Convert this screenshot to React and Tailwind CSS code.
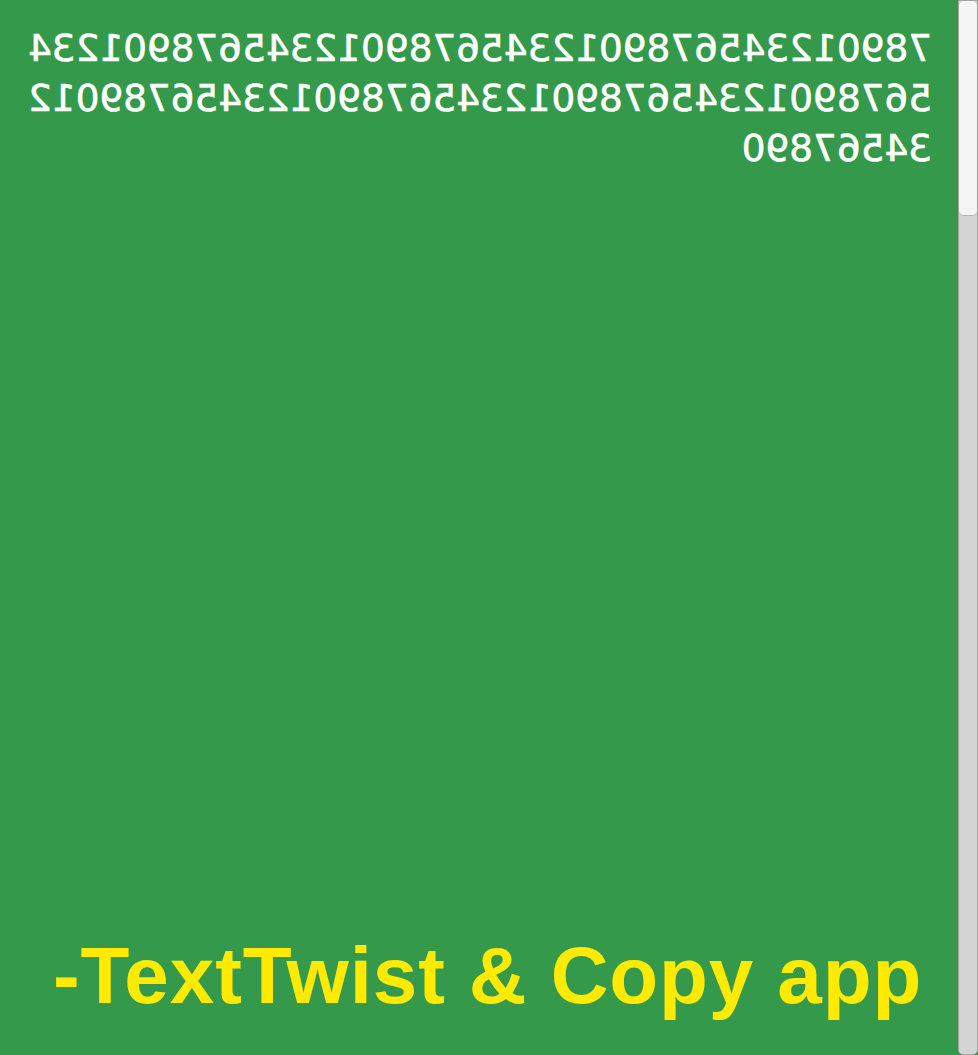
import React from "react";

const twisted = "7890" + "1234567890".repeat(8);

export default function App() {
  return (
    <div className="flex h-screen w-full overflow-hidden bg-[#34994a]">
      <div className="flex min-w-0 flex-1 flex-col">
        {/* texto girado */}
        <div className="-scale-x-100 px-[26px] pt-[23px]">
          <p
            className="break-all text-[37.4px] leading-[50px] text-white [-webkit-text-stroke:0.6px_white]"
            style={{ fontFamily: '"DejaVu Sans", sans-serif' }}
          >
            {twisted}
          </p>
        </div>

        <div className="flex-1" />

        <h1
          className="pb-[33px] pl-[53px] text-[80px] font-bold leading-[92px] tracking-[0.9px] text-[#ffea00]"
          style={{ fontFamily: '"Liberation Sans", Arial, sans-serif' }}
        >
          -TextTwist &amp; Copy app
        </h1>
      </div>

      {/* barra lateral */}
      <div className="flex w-[20px] flex-col overflow-hidden rounded-b-[5px] border border-[#a3a3a3] bg-[#d4d4d4]">
        <div className="h-[215px] rounded-[5px] border-b border-[#b5b5b5] bg-[#f5f5f5]" />
      </div>
    </div>
  );
}
